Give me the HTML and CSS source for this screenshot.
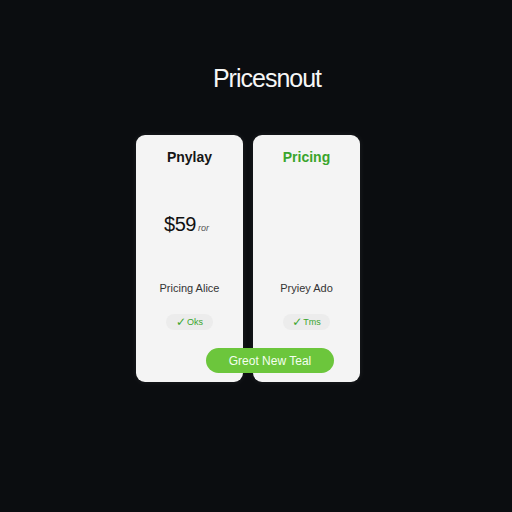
FILE: index.html
```html
<!DOCTYPE html>
<html>
<head>
	<meta charset="utf-8">
	<meta name="viewport" content="width=device-width, initial-scale=1">
	<title>Pricesnout</title>
	<link rel="stylesheet" href="styles.css">
</head>
<body>
	<div class="page">
		<h1 class="brand">Pricesnout</h1>

		<div class="plans">
			<div class="plan">
				<h4 class="plan-name">Pnylay</h4>
				<div class="price">$59<span class="per">ror</span></div>
				<p class="plan-note">Pricing Alice</p>
				<span class="chip"><span class="tick">&#10003;</span>Oks</span>
			</div>
			<div class="plan">
				<h4 class="plan-name green">Pricing</h4>
				<div class="price"></div>
				<p class="plan-note">Pryiey Ado</p>
				<span class="chip"><span class="tick">&#10003;</span>Tms</span>
			</div>

			<!-- sits across both cards -->
			<button class="cta">Greot New Teal</button>
		</div>
	</div>
</body>
</html>
```

FILE: styles.css
```css
*{
	margin: 0;
	padding: 0;
	box-sizing: border-box;
}
body{
	width: 100%;
	min-height: 100vh;
	background: #0b0d10;
	font-family: "Liberation Sans", Arial, sans-serif;
}
.page{
	width: 512px;
	height: 512px;
	padding-top: 64px;
}
.brand{
	padding-left: 22px;
	text-align: center;
	color: #f6f6f6;
	font-size: 25px;
	font-weight: normal;
	letter-spacing: -1px;
	line-height: 28px;
}
.plans{
	position: relative;
	display: flex;
	gap: 10px;
	margin-top: 43px;
	margin-left: 136px;
}
.plan{
	width: 107px;
	height: 247px;
	display: flex;
	flex-direction: column;
	align-items: center;
	padding-top: 14px;
	background: #f4f4f4;
	border-radius: 9px;
	box-shadow: 0 0 6px rgba(255, 255, 255, 0.08);
}
.plan-name{
	font-size: 14px;
	line-height: 16px;
	font-weight: bold;
	color: #161616;
}
.green{
	color: #3aa52c;
}
.price{
	height: 22px;
	margin-top: 48px;
	margin-right: 6px;
	font-size: 20px;
	line-height: 22px;
	color: #111;
	letter-spacing: -0.5px;
}
.per{
	margin-left: 2px;
	font-size: 9px;
	font-style: italic;
	color: #555;
	letter-spacing: 0;
}
.plan-note{
	margin-top: 46px;
	font-size: 11px;
	line-height: 14px;
	color: #333;
}
.chip{
	margin-top: 19px;
	height: 16px;
	width: 47px;
	display: flex;
	align-items: center;
	justify-content: center;
	background: #ececec;
	border-radius: 8px;
	color: #3aa52c;
	font-size: 9px;
}
.tick{
	font-family: "DejaVu Sans", sans-serif;
	font-size: 12px;
	margin-right: 1px;
}
.cta{
	position: absolute;
	left: 70px;
	top: 213px;
	width: 128px;
	height: 25px;
	border: none;
	border-radius: 13px;
	background: #6cc63c;
	color: #f4fff0;
	font-family: "Liberation Sans", Arial, sans-serif;
	font-size: 12px;
}
```
